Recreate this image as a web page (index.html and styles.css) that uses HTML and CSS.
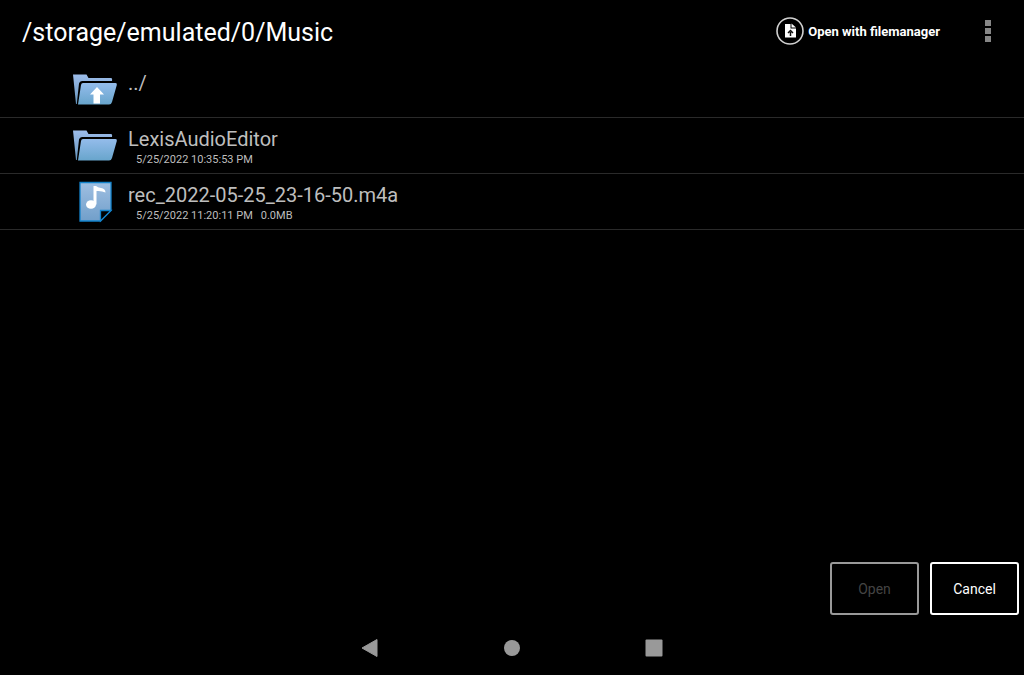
FILE: index.html
```
<!DOCTYPE html>
<html lang="en">
  <head>
    <meta charset="UTF-8" />
    <meta name="viewport" content="width=device-width, initial-scale=1.0" />
    <title>Music</title>
    <link rel="stylesheet" href="styles.css">
  </head>
  <body>
    <header class="header">
      <h1 class="path">/storage/emulated/0/Music</h1>
      <button class="manager" type="button">
        <svg width="28" height="28" viewBox="0 0 28 28">
          <circle cx="14" cy="14" r="13" fill="none" stroke="#d0d0d0" stroke-width="1.6" />
          <path d="M9 7h5.500v4.500H20V20.500H9z" fill="#fff" />
          <path d="M15.500 6.500l4.500 4h-4.500z" fill="#fff" />
          <path d="M14.500 19v-4M12 16l2.500-2.500L17 16" fill="none" stroke="#111" stroke-width="1.500" />
        </svg>
        <span>Open with filemanager</span>
      </button>
      <button class="more" type="button" aria-label="More options">
        <svg width="6" height="22" viewBox="0 0 6 22" fill="#868686">
          <rect width="6" height="6" />
          <rect y="8" width="6" height="6" />
          <rect y="16" width="6" height="6" />
        </svg>
      </button>
    </header>

    <main class="main">
      <ul class="files">
        <li class="file">
          <svg class="icon" width="46" height="42" viewBox="0 0 46 42">
            <defs>
              <linearGradient id="back" x1="0" y1="0" x2="0" y2="1">
                <stop offset="0" stop-color="#9dbdeb" />
                <stop offset="1" stop-color="#6595bd" />
              </linearGradient>
              <linearGradient id="front" x1="0" y1="0" x2="0" y2="1">
                <stop offset="0" stop-color="#94bceb" />
                <stop offset="1" stop-color="#68a5cc" />
              </linearGradient>
            </defs>
            <path d="M1 5.500h13.500l2 3.500H39q1.500 0 1 3H10q-2.500 0-3 2.500L4.800 35H4z" fill="url(#back)" />
            <path d="M11 14h32.500q1.800 0 1.300 2L40 33q-.7 2.500-3 2.500H6L9 16q.3-2 2-2z" fill="url(#front)" />
            <path d="M25 18l7 7.500h-4v9h-6.500v-9H18z" fill="#fff" />
          </svg>
          <div class="info">
            <a class="name" href="#">../</a>
          </div>
        </li>
        <li class="file">
          <svg class="icon" width="46" height="42" viewBox="0 0 46 42">
            <path d="M1 5.500h13.500l2 3.500H39q1.500 0 1 3H10q-2.500 0-3 2.500L4.800 35H4z" fill="url(#back)" />
            <path d="M11 14h32.500q1.800 0 1.300 2L40 33q-.7 2.500-3 2.500H6L9 16q.3-2 2-2z" fill="url(#front)" />
          </svg>
          <div class="info">
            <a class="name" href="#">LexisAudioEditor</a>
            <div class="details"><span>5/25/2022 10:35:53 PM</span></div>
          </div>
        </li>
        <li class="file">
          <svg class="icon" width="46" height="42" viewBox="0 0 46 42">
            <defs>
              <linearGradient id="sheet" x1="0" y1="0" x2="0" y2="1">
                <stop offset="0" stop-color="#9fbfe2" />
                <stop offset="1" stop-color="#719fca" />
              </linearGradient>
            </defs>
            <path d="M8 1.500h31v28l-10.500 10.500H8z" fill="url(#sheet)" stroke="#1383cb" stroke-width="1.300" />
            <path d="M28.500 40V29.500H39z" fill="#000" stroke="#1383cb" stroke-width="1.300" />
            <ellipse cx="19" cy="23.500" rx="5" ry="4.300" fill="#fff" />
            <path d="M21.500 23.500V5H24q1.500 1.500 5 2 4.500.8 4.500 4.500-4-2-9-1.500v13.500z" fill="#fff" />
          </svg>
          <div class="info">
            <a class="name" href="#">rec_2022-05-25_23-16-50.m4a</a>
            <div class="details"><span>5/25/2022 11:20:11 PM</span><span>0.0MB</span></div>
          </div>
        </li>
      </ul>
    </main>

    <div class="actions">
      <button class="action" type="button" disabled>Open</button>
      <button class="action" type="button">Cancel</button>
    </div>

    <nav class="navbar">
      <button type="button" aria-label="Back">
        <svg width="18" height="18" viewBox="0 0 18 18"><path d="M1 9L16 .5v17z" fill="#999" stroke="#999" stroke-linejoin="round" /></svg>
      </button>
      <button type="button" aria-label="Home">
        <svg width="18" height="18" viewBox="0 0 18 18"><circle cx="9" cy="9" r="8" fill="#999" /></svg>
      </button>
      <button type="button" aria-label="Recent apps">
        <svg width="18" height="18" viewBox="0 0 18 18"><rect x=".5" y=".5" width="17" height="17" rx="1" fill="#999" /></svg>
      </button>
    </nav>
  </body>
</html>
```

FILE: styles.css
```
* {
  box-sizing: border-box;
}
body {
  margin: 0;
  min-height: 100vh;
  display: flex;
  flex-direction: column;
  background: #000;
  color: #fff;
  font-family: Roboto, sans-serif;
}
button {
  padding: 0;
  border: 0;
  background: none;
  color: inherit;
  font-family: inherit;
}
svg {
  display: block;
}

.header {
  display: flex;
  align-items: center;
  height: 62px;
  padding: 0 22px;
}
.path {
  flex: 1;
  margin: 0;
  padding-top: 4px;
  font-size: 25px;
  font-weight: 400;
  line-height: 32px;
}
.manager {
  display: flex;
  align-items: center;
  gap: 4px;
  font-size: 13px;
  font-weight: 700;
}
.more {
  display: flex;
  justify-content: center;
  width: 28px;
  margin-left: 34px;
}

.main {
  flex: 1;
}
.files {
  margin: 0;
  padding: 0;
  list-style: none;
}
.file {
  display: flex;
  gap: 10px;
  height: 56px;
  padding: 7px 72px;
  border-bottom: 1px solid #2a2a2a;
}
.icon {
  flex: none;
}
.info {
  padding-top: 2px;
}
.name {
  display: block;
  color: #bebebe;
  font-size: 20px;
  line-height: 24px;
  text-decoration: none;
}
.details {
  display: flex;
  gap: 8px;
  padding: 2px 0 0 8px;
  color: #bebebe;
  font-size: 11px;
  line-height: 14px;
}

.actions {
  display: flex;
  justify-content: flex-end;
  gap: 11px;
  padding: 0 5px 6px;
}
.action {
  width: 89px;
  height: 53px;
  border: 2px solid #fff;
  border-radius: 3px;
  font-size: 14px;
}
.action:disabled {
  border-color: #999;
  color: #444;
}

.navbar {
  display: flex;
  justify-content: center;
  gap: 124px;
  padding: 18px 0;
}
```
